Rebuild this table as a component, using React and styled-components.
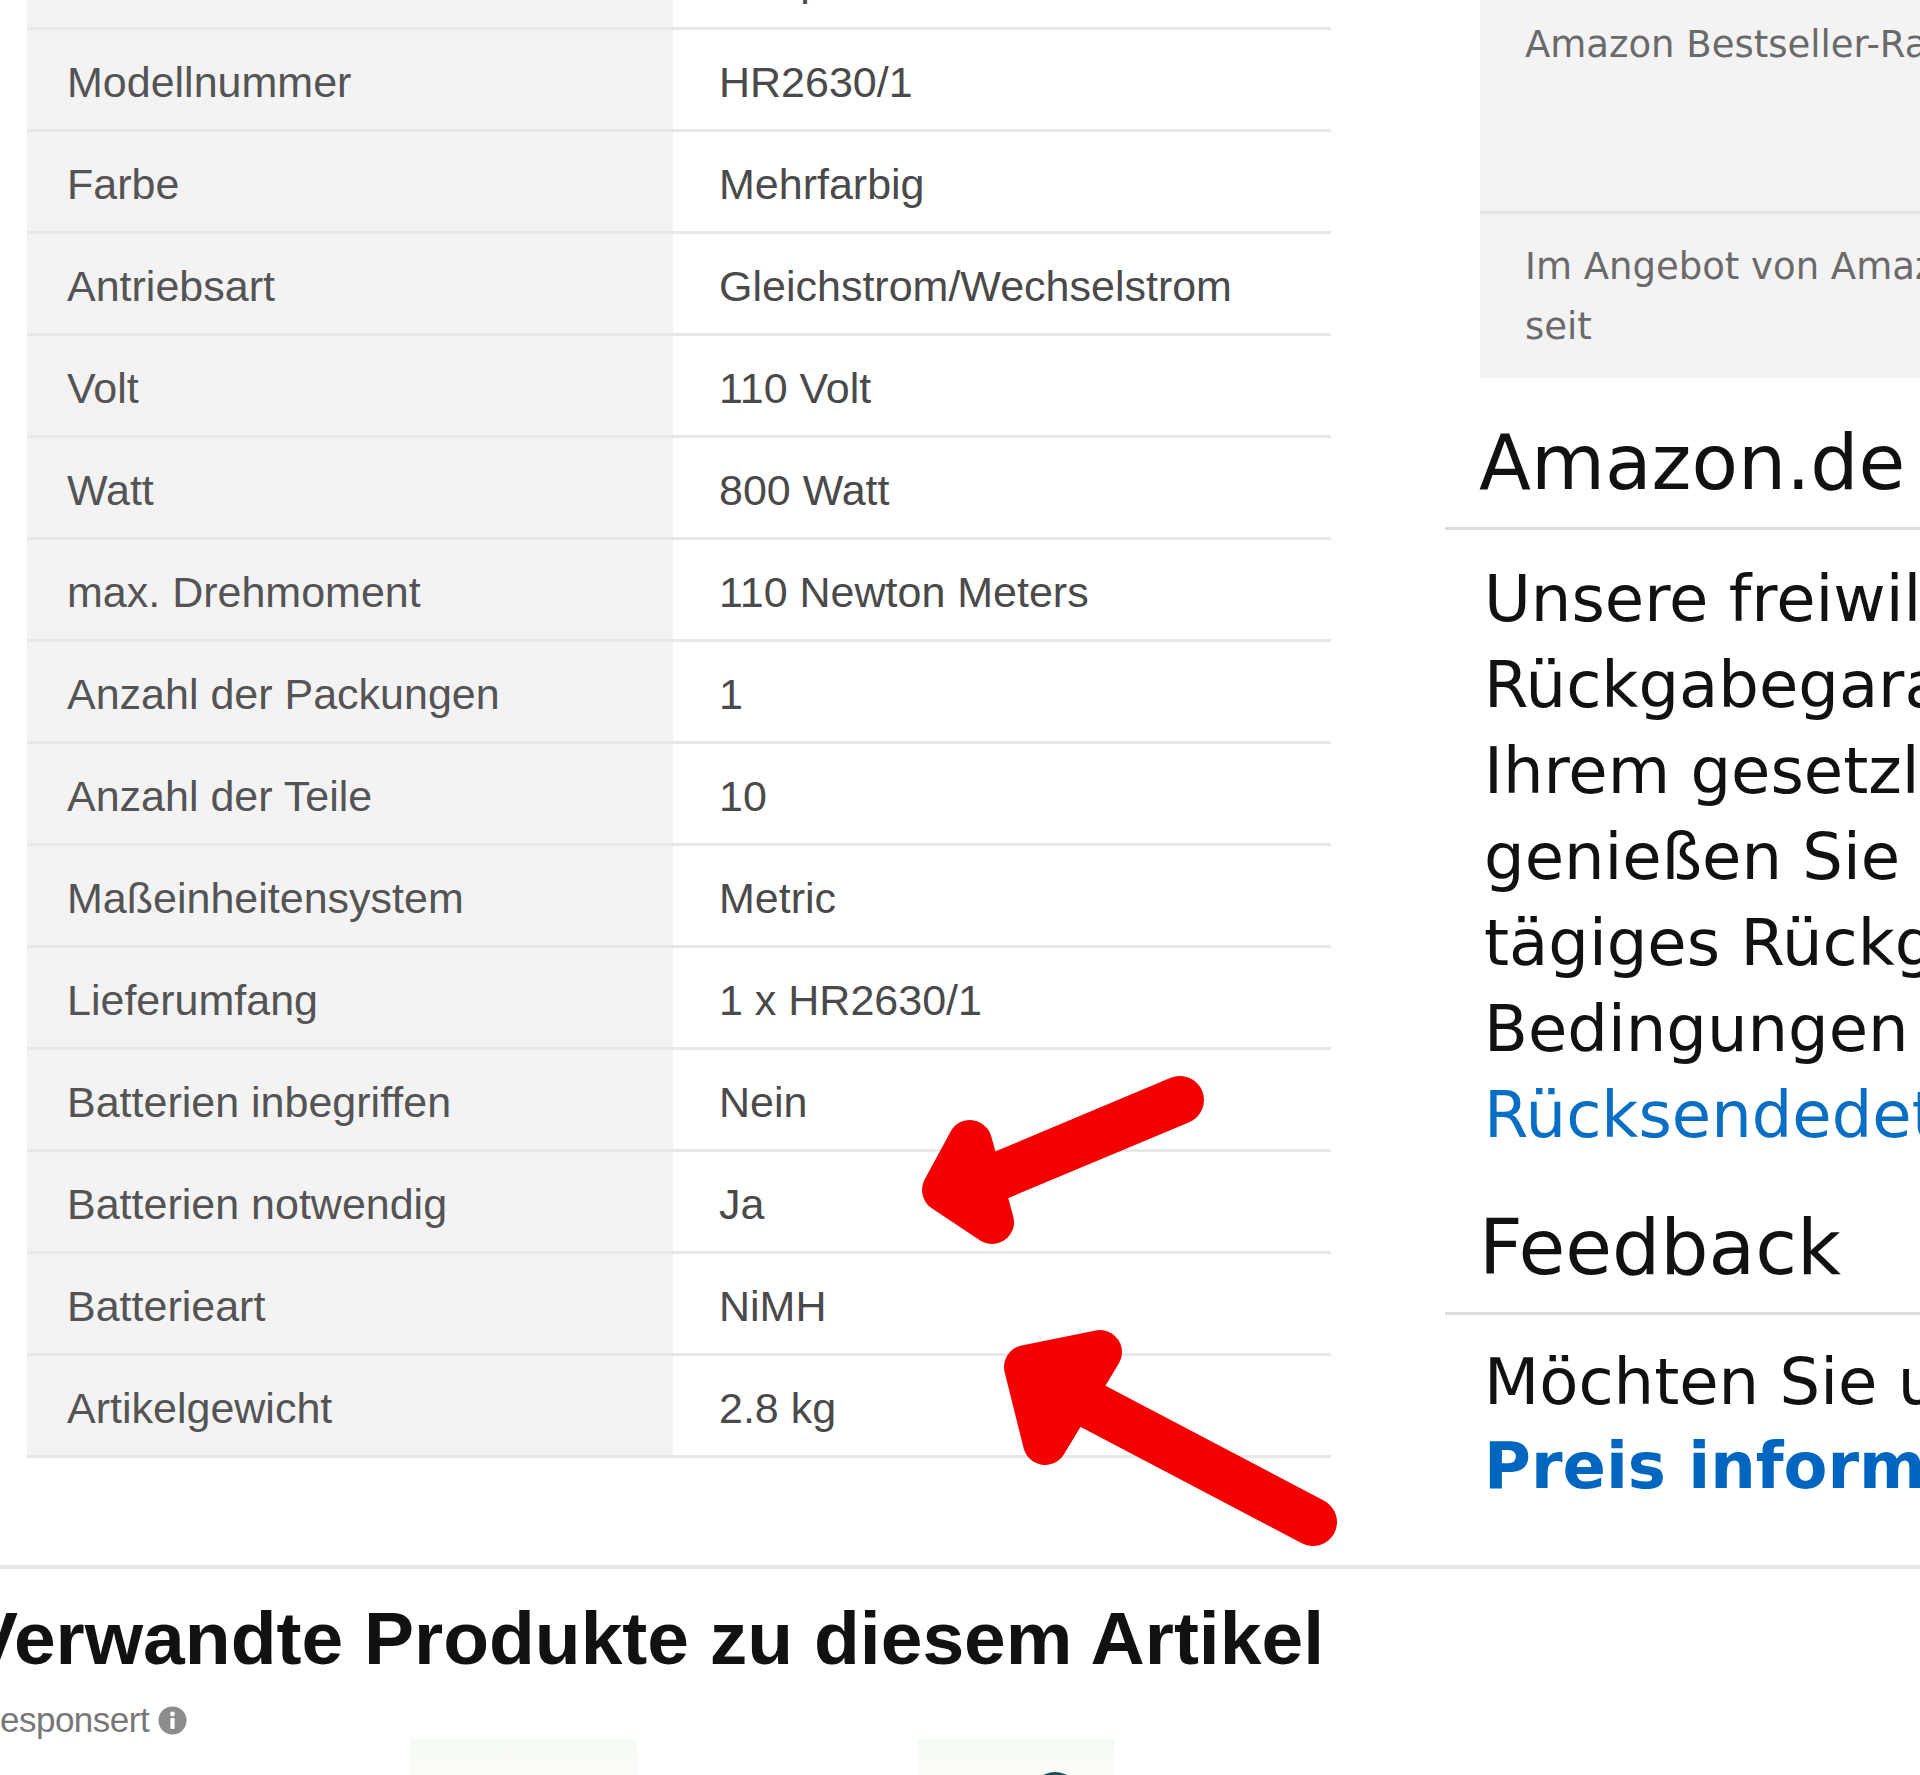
import styled, { createGlobalStyle } from "styled-components"

const GlobalStyle = createGlobalStyle`
  html, body {
    margin: 0;
    padding: 0;
    background: #ffffff;
  }
  body {
    width: 1920px;
    height: 1775px;
    overflow: hidden;
  }
`

const Page = styled.div`
  position: relative;
  width: 1920px;
  height: 1775px;
  overflow: hidden;
  background: #ffffff;
  font-family: "Liberation Sans", Arial, sans-serif;
`

const TopArea = styled.div`
  display: flex;
  align-items: flex-start;
`

const DetailsTable = styled.div`
  flex: 0 0 1304px;
  margin: -72px 0 0 27px;
  padding-bottom: 107px;
  display: flex;
  flex-direction: column;
`

const Row = styled.div`
  box-sizing: border-box;
  display: flex;
  height: 102px;
  border-bottom: 3px solid #e8e8e8;
`

const Label = styled.div`
  flex: 0 0 646px;
  display: flex;
  align-items: center;
  padding: 5px 0 0 40px;
  box-sizing: border-box;
  background: #f3f3f3;
  color: #545454;
  font-size: 43px;
  white-space: nowrap;
`

const Value = styled.div`
  flex: 1;
  margin-left: 4px;
  display: flex;
  align-items: center;
  padding: 5px 0 0 42px;
  color: #4a4a4a;
  font-size: 43px;
  white-space: nowrap;
`

const RightCol = styled.div`
  flex: 0 0 1000px;
  margin-left: 114px;
  display: flex;
  flex-direction: column;
  font-family: "DejaVu Sans", "Noto Sans", sans-serif;
  color: #111111;
`

const SpecBox = styled.div`
  margin-left: 35px;
  background: #f3f3f3;
  display: flex;
  flex-direction: column;
`

const SpecCell = styled.div`
  box-sizing: border-box;
  height: ${p => p.$h}px;
  padding: ${p => p.$top}px 0 0 45px;
  font-size: 37px;
  line-height: 60px;
  color: #6a6a6a;
  white-space: nowrap;
  border-bottom: ${p => (p.$line ? "3px solid #e3e3e3" : "none")};
`

const SectionTitle = styled.h2`
  margin: ${p => p.$top}px 0 0 34px;
  font-size: 76px;
  line-height: 76px;
  font-weight: normal;
  color: #111111;
  white-space: nowrap;
`

const Rule = styled.div`
  height: 3px;
  margin-top: 26px;
  background: #dddddd;
`

const Body = styled.p`
  margin: ${p => p.$top}px 0 0 39px;
  font-size: 64px;
  line-height: ${p => p.$lh || 86}px;
  color: #111111;
  white-space: nowrap;
`

const Link = styled.span`
  color: ${p => (p.$bold ? "#0066c0" : "#0a6fc4")};
  font-weight: ${p => (p.$bold ? "bold" : "normal")};
`

const FullRule = styled.div`
  height: 4px;
  background: #e6e6e6;
`

const RelatedTitle = styled.h2`
  margin: 27px 0 0 -32px;
  font-size: 75px;
  line-height: 85px;
  font-weight: bold;
  color: #111111;
  white-space: nowrap;
`

const Sponsored = styled.div`
  margin: 21px 0 0 -19px;
  display: flex;
  align-items: center;
  gap: 8px;
  font-size: 35px;
  line-height: 36px;
  letter-spacing: -0.5px;
  color: #777777;
`

const ProductStrip = styled.div`
  display: flex;
  margin-top: 1px;
`

const ProductTile = styled.div`
  position: relative;
  flex: 0 0 ${p => p.$w}px;
  margin-left: ${p => p.$ml}px;
  height: 60px;
  background: linear-gradient(#f6faf4, #fcfdfb);
`

const ArrowLayer = styled.svg`
  position: absolute;
  top: 0;
  left: 0;
  pointer-events: none;
`

const details = [
  ["Marke", "Philips"],
  ["Modellnummer", "HR2630/1"],
  ["Farbe", "Mehrfarbig"],
  ["Antriebsart", "Gleichstrom/Wechselstrom"],
  ["Volt", "110 Volt"],
  ["Watt", "800 Watt"],
  ["max. Drehmoment", "110 Newton Meters"],
  ["Anzahl der Packungen", "1"],
  ["Anzahl der Teile", "10"],
  ["Maßeinheitensystem", "Metric"],
  ["Lieferumfang", "1 x HR2630/1"],
  ["Batterien inbegriffen", "Nein"],
  ["Batterien notwendig", "Ja"],
  ["Batterieart", "NiMH"],
  ["Artikelgewicht", "2.8 kg"],
]

const InfoIcon = () => (
  <svg width="31" height="31" viewBox="0 0 31 31">
    <circle cx="15.5" cy="15.5" r="14" fill="#8c8c8c" />
    <circle cx="15.5" cy="9" r="2.4" fill="#ffffff" />
    <rect x="13.4" y="13" width="4.2" height="11" rx="1" fill="#ffffff" />
  </svg>
)

const App = () => {
  return (
    <Page>
      <GlobalStyle />
      <TopArea>
        <DetailsTable>
          {details.map(([label, value]) => (
            <Row key={label}>
              <Label>{label}</Label>
              <Value>{value}</Value>
            </Row>
          ))}
        </DetailsTable>

        <RightCol>
          <SpecBox>
            <SpecCell $h={214} $top={15} $line>Amazon Bestseller-Rang</SpecCell>
            <SpecCell $h={164} $top={23}>
              Im Angebot von Amazon.de
              <br />
              seit
            </SpecCell>
          </SpecBox>

          <SectionTitle $top={47}>Amazon.de Rückgabegarantie</SectionTitle>
          <Rule />
          <Body $top={26}>
            Unsere freiwillige 30-tägige
            <br />
            Rückgabegarantie: Zusätzlich zu
            <br />
            Ihrem gesetzlichen Widerrufsrecht
            <br />
            genießen Sie bei Amazon.de ein 30-
            <br />
            tägiges Rückgaberecht. Es gelten die
            <br />
            Bedingungen der Amazon.de
            <br />
            <Link>Rücksendedetails</Link>
          </Body>

          <SectionTitle $top={52}>Feedback</SectionTitle>
          <Rule />
          <Body $top={25} $lh={84}>
            Möchten Sie uns über einen niedrigeren
            <br />
            <Link $bold>Preis informieren?</Link>
          </Body>
        </RightCol>
      </TopArea>

      <FullRule />

      <RelatedTitle>Verwandte Produkte zu diesem Artikel</RelatedTitle>
      <Sponsored>
        gesponsert
        <InfoIcon />
      </Sponsored>
      <ProductStrip>
        <ProductTile $ml={410} $w={227} />
        <ProductTile $ml={281} $w={197}>
          <svg width="197" height="60" viewBox="0 0 197 60">
            <circle cx="137" cy="58" r="25" fill="#1f4f55" />
          </svg>
        </ProductTile>
      </ProductStrip>

      <ArrowLayer width="1920" height="1775" viewBox="0 0 1920 1775">
        <g fill="#f40000" stroke="#f40000" strokeLinecap="round" strokeLinejoin="round">
          <line x1="1180" y1="1100" x2="975" y2="1186" strokeWidth="48" />
          <polygon points="970,1142 944,1190 992,1222" strokeWidth="44" />
          <line x1="1313" y1="1522" x2="1062" y2="1390" strokeWidth="48" />
          <polygon points="1026,1367 1100,1352 1045,1443" strokeWidth="44" />
        </g>
      </ArrowLayer>
    </Page>
  )
}

export default App
